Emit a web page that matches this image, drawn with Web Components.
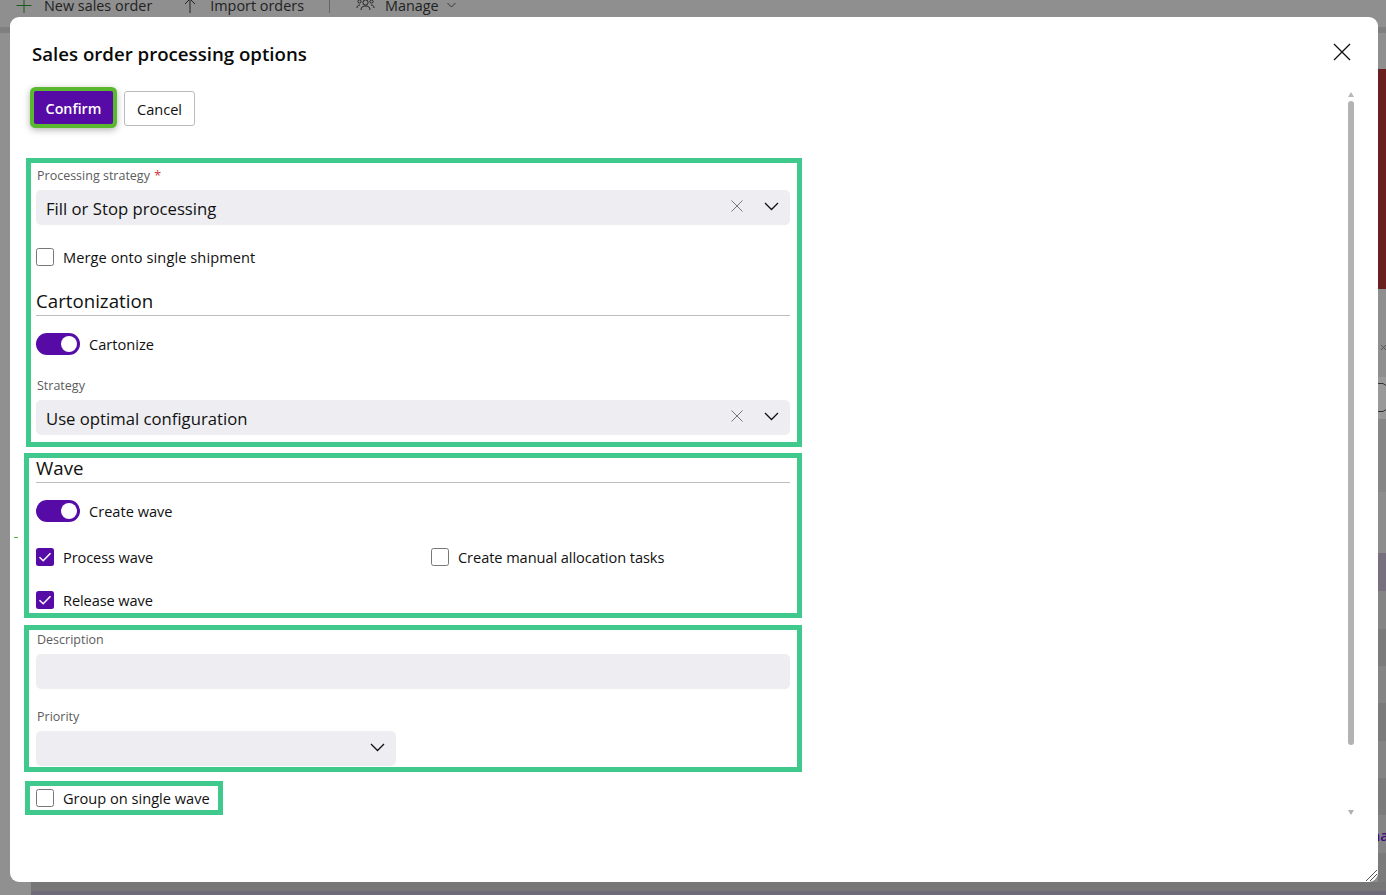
<!doctype html>
<html lang="en"><head><meta charset="utf-8"><title>Sales order processing options</title>
<style>
html,body{margin:0;padding:0;height:100%;overflow:hidden}
body{font-family:"Open Sans","Noto Sans",sans-serif;color:#111}
</style></head>
<body>
<app-backdrop>
  <tool-item icon="plus">New sales order</tool-item>
  <tool-item icon="up">Import orders</tool-item>
  <tool-sep></tool-sep>
  <tool-item icon="gear" caret>Manage</tool-item>
</app-backdrop>
<order-dialog heading="Sales order processing options">
  <div slot="actions" style="display:flex;gap:11px;align-items:flex-start">
    <action-button primary>Confirm</action-button>
    <action-button>Cancel</action-button>
  </div>
  <note-box style="margin:0 0 6px 2px;width:776px;height:289px;padding:0 7px 0 5px">
    <form-select style="margin-top:3px" label="Processing strategy" required value="Fill or Stop processing" clearable></form-select>
    <form-check style="margin-top:23px;letter-spacing:.08px">Merge onto single shipment</form-check>
    <section-head style="margin-top:24px">Cartonization</section-head>
    <form-toggle style="margin-top:17px">Cartonize</form-toggle>
    <form-select style="margin-top:21px" label="Strategy" value="Use optimal configuration" clearable></form-select>
  </note-box>
  <note-box style="margin:0 0 7px 0;width:778px;height:165px;padding:0 7px">
    <section-head style="margin-top:-1px">Wave</section-head>
    <form-toggle style="margin-top:17px">Create wave</form-toggle>
    <div style="display:grid;grid-template-columns:395px 1fr;margin-top:26px">
      <form-check checked style="letter-spacing:-.1px">Process wave</form-check>
      <form-check style="letter-spacing:-.07px">Create manual allocation tasks</form-check>
    </div>
    <form-check checked style="margin-top:25px;letter-spacing:-.1px">Release wave</form-check>
  </note-box>
  <note-box style="margin:0 0 9px 0;width:778px;height:147px;padding:0 7px">
    <form-select style="margin-top:0" label="Description" novalue nochevron></form-select>
    <form-select style="margin-top:18px;width:360px" label="Priority" novalue></form-select>
  </note-box>
  <note-box style="margin:0 0 0 1px;width:198px;height:34px;padding:0 6px">
    <form-check style="margin-top:3px">Group on single wave</form-check>
  </note-box>
</order-dialog>

<script>
const FONT = '"Open Sans","Noto Sans",sans-serif';
function shadow(el, html){ el.attachShadow({mode:'open'}).innerHTML = html; }
const ICONS = {
  plus:'<path d="M8 0v15M0.5 7.5h15" stroke="#1c5a1c" stroke-width="1" fill="none"/>',
  up:'<path d="M8 15V1M3 6l5-5 5 5" stroke="#222" stroke-width="1" fill="none"/>',
  gear:'<g stroke="#222" fill="none" stroke-width="1"><circle cx="9.5" cy="4.5" r="2.6"/><circle cx="3.5" cy="3.5" r="1.6"/><circle cx="15.5" cy="3.5" r="1.6"/><path d="M1 10c0-2 1-3 3-3M18 10c0-2-1-3-3-3M5 12c0-3 2-4 4.500-4s4.500 1 4.500 4"/></g>'
};

customElements.define('app-backdrop', class extends HTMLElement{
  constructor(){super();shadow(this,`<style>
    :host{display:block;width:1386px;height:895px;overflow:hidden;position:relative;
      background:linear-gradient(to bottom,#8f8f8f 0 27px,#7f7f7f 27px 33px,#909090 33px 882px,#777 882px 891px,#6f6a79 891px);}
    .bar{display:flex;align-items:center;height:14px;margin-top:-2px;padding-left:16px;font:14.4px ${FONT};color:#222}
    .strip{position:absolute;left:1378px;top:0;width:8px;height:891px;overflow:hidden;color:#3b0a7a;font:600 14.6px/20px ${FONT};
      background:linear-gradient(to bottom,#8f8f8f 0 27px,#7f7f7f 27px 33px,#8f8f8f 33px 69px,#6b2020 69px 289px,#8f8f8f 289px 377px,#9a9a9a 377px 419px,#868686 419px 492px,#8d8d8d 492px 553px,#76707f 553px 591px,#858585 591px 629px,#7b7b7b 629px 666px,#858585 666px 703px,#7b7b7b 703px 741px,#858585 741px 778px,#7b7b7b 778px 815px,#858585 815px 853px,#7b7b7b 853px 882px,#777 882px);}
    .strip span{position:absolute;left:-7px;top:825px;white-space:nowrap}
    .strip svg{position:absolute;left:0;top:340px}
    .rest{position:absolute;left:0;top:882px;width:31px;height:13px;background:#909090}
  </style><div class="bar"><slot></slot></div><div class="rest"></div><div class="strip"><svg width="8" height="75" viewBox="0 0 8 75"><path d="M3 5l5 5M8 5L3 10" stroke="#555" fill="none"/><path d="M0 43.500h5l3 2M0 71.500h5l3-2" stroke="#333" fill="none"/></svg><span>na</span></div>`)}
});
customElements.define('tool-item', class extends HTMLElement{
  constructor(){super();
    const k=this.getAttribute('icon');
    const w=k==='gear'?19:16;
    shadow(this,`<style>
    :host{display:inline-flex;align-items:center;gap:${k==='gear'?10:12}px;margin-right:${k==='up'?25:k==='plus'?30:29}px;white-space:nowrap}
    svg{flex:none;display:block}
    .c{margin-left:-2px}
  </style><svg width="${w}" height="15" viewBox="0 0 ${w} 15">${ICONS[k]}</svg><slot></slot>${this.hasAttribute('caret')?'<svg class="c" width="9" height="6" viewBox="0 0 9 6"><path d="M.5 1l4 4 4-4" stroke="#333" fill="none"/></svg>':''}`)}
});
customElements.define('tool-sep', class extends HTMLElement{
  constructor(){super();shadow(this,`<style>:host{display:block;width:1px;height:16px;background:#666;margin-right:26px}</style>`)}
});
customElements.define('order-dialog', class extends HTMLElement{
  constructor(){super();shadow(this,`<style>
    :host{display:flex;flex-direction:column;position:absolute;left:10px;top:17px;width:1368px;height:865px;background:#fff;border-radius:9px;overflow:hidden;box-sizing:border-box;color:#111;font-family:${FONT}}
    header{display:flex;justify-content:space-between;align-items:center;height:74px;padding:0 27px 0 22px;flex:none}
    h2{margin:0;font:600 18.65px/26px ${FONT};color:#0a0a0a;position:relative;top:-0.500px}
    button{all:unset;display:block;width:18px;height:18px;position:relative;top:-2px}
    .actions{flex:none;height:67px;padding-left:20px;box-sizing:border-box}
    .main{flex:1;display:flex;min-height:0}
    .content{width:800px;padding-left:14px;box-sizing:border-box}
    .sb{position:absolute;left:1338px;top:75px;width:6px;height:723px;display:flex;flex-direction:column;align-items:center}
    .thumb{width:6px;height:644px;margin-top:4px;background:#b3b3b3;border-radius:3px}
    .up{width:0;height:0;border:3.500px solid transparent;border-top:0;border-bottom:5px solid #b8b8b8}
    .down{width:0;height:0;border:3.500px solid transparent;border-bottom:0;border-top:5px solid #b0b0b0;margin-top:auto}
    .grip{position:absolute;right:0;bottom:0;width:13px;height:13px}
    .dash{position:absolute;left:4px;top:520px;width:4px;height:1px;background:#5ab82f}
  </style>
  <header><h2>${this.getAttribute('heading')}</h2>
    <button aria-label="Close"><svg width="18" height="18" viewBox="0 0 18 18"><path d="M1 1l16 16M17 1L1 17" stroke="#111" stroke-width="1.300" fill="none"/></svg></button></header>
  <div class="actions"><slot name="actions"></slot></div>
  <div class="main"><div class="content"><slot></slot></div></div>
  <div class="dash"></div>
  <div class="sb"><div class="up"></div><div class="thumb"></div><div class="down"></div></div>
  <svg class="grip" viewBox="0 0 13 13"><path d="M1 12L12 1M5 12l7-7M9 12l3-3" stroke="#555" stroke-width="1" fill="none"/></svg>`)}
});
customElements.define('action-button', class extends HTMLElement{
  constructor(){super();const p=this.hasAttribute('primary');shadow(this,`<style>
    :host{display:inline-flex;box-sizing:border-box;align-items:center;justify-content:center;font:${p?'600 14.3px':'14.6px'} ${FONT};
      ${p?'width:79px;height:33px;margin:0 0 0 4px;padding-top:2px;background:#570ba6;color:#fff;border-radius:2px;box-shadow:0 0 0 4px #5ab82f,0 2px 7px 4px rgba(0,0,0,.3);margin-right:0':
      'width:71px;height:35px;background:#fff;color:#111;border:1px solid #bcbcbc;border-radius:3px'}}
  </style><slot></slot>`)}
});
customElements.define('note-box', class extends HTMLElement{
  constructor(){super();shadow(this,`<style>:host{display:block;box-sizing:border-box;border:5px solid #40c98c;overflow:hidden}</style><slot></slot>`)}
});
customElements.define('form-select', class extends HTMLElement{
  constructor(){super();
    const clear=this.hasAttribute('clearable'),chev=!this.hasAttribute('nochevron'),val=this.getAttribute('value')||'';
    shadow(this,`<style>
    :host{display:block}
    label{display:block;height:24px;font:12.5px/20px ${FONT};color:#5c5c5c;padding-left:1px}
    b{font-weight:400;color:#d13438;margin-left:1px}
    .f{height:35px;background:#eeeef2;border-radius:5px;display:flex;align-items:center;padding:0 11px 0 10px;box-sizing:border-box;font:16.7px ${FONT};color:#111}
    .v{flex:1;white-space:nowrap;position:relative;top:1px}
    svg{flex:none;display:block}
    .x{margin-right:20px;position:relative;top:-2px}
    .ch{position:relative;top:-1.500px}
  </style><label>${this.getAttribute('label')}${this.hasAttribute('required')?' <b>*</b>':''}</label>
  <div class="f"><span class="v">${val}</span>
  ${clear?'<svg class="x" width="14" height="14" viewBox="0 0 14 14"><path d="M1.500 1.500l11 11M12.500 1.500l-11 11" stroke="#777" stroke-width="1" fill="none"/></svg>':''}
  ${chev?'<svg class="ch" width="15" height="9" viewBox="0 0 15 9"><path d="M1 1l6.500 6.500L14 1" stroke="#111" stroke-width="1.300" fill="none"/></svg>':''}</div>`)}
});
customElements.define('form-check', class extends HTMLElement{
  constructor(){super();const c=this.hasAttribute('checked');shadow(this,`<style>
    :host{display:flex;align-items:center;gap:9px;height:18px;font:14.6px/18px ${FONT};color:#111;white-space:nowrap}
    .b{width:18px;height:18px;box-sizing:border-box;border-radius:2.500px;flex:none;${c?'background:#570ba6':'border:1px solid #777;background:#fff'}}
    svg{display:block}
  </style><div class="b">${c?'<svg width="18" height="18" viewBox="0 0 18 18"><path d="M3.500 9.300l3.700 3.500 7.300-7.600" stroke="#fff" stroke-width="1.500" fill="none"/></svg>':''}</div><span><slot></slot></span>`)}
});
customElements.define('form-toggle', class extends HTMLElement{
  constructor(){super();shadow(this,`<style>
    :host{display:flex;align-items:center;gap:9px;height:22px;font:14.6px/22px ${FONT};color:#111}
    .t{width:44px;height:22px;border-radius:11px;background:#570ba6;display:flex;align-items:center;justify-content:flex-end;padding-right:3px;box-sizing:border-box;flex:none}
    .k{width:16px;height:16px;border-radius:50%;background:#fff}
  </style><div class="t"><div class="k"></div></div><slot></slot>`)}
});
customElements.define('section-head', class extends HTMLElement{
  constructor(){super();shadow(this,`<style>
    :host{display:block;font:18.7px/22px ${FONT};color:#111;height:25px;border-bottom:1px solid #bdbdbd}
  </style><slot></slot>`)}
});
</script>
</body></html>
